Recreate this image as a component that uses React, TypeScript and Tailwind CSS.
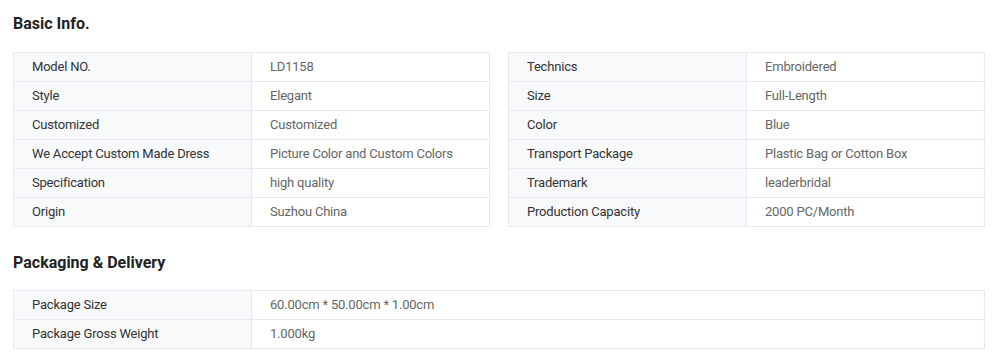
const basicLeft: [string, string][] = [
  ["Model NO.", "LD1158"],
  ["Style", "Elegant"],
  ["Customized", "Customized"],
  ["We Accept Custom Made Dress", "Picture Color and Custom Colors"],
  ["Specification", "high quality"],
  ["Origin", "Suzhou China"],
];

const basicRight: [string, string][] = [
  ["Technics", "Embroidered"],
  ["Size", "Full-Length"],
  ["Color", "Blue"],
  ["Transport Package", "Plastic Bag or Cotton Box"],
  ["Trademark", "leaderbridal"],
  ["Production Capacity", "2000 PC/Month"],
];

const packaging: [string, string][] = [
  ["Package Size", "60.00cm * 50.00cm * 1.00cm"],
  ["Package Gross Weight", "1.000kg"],
];

function InfoTable({ rows, half }: { rows: [string, string][]; half?: boolean }) {
  return (
    <table className="w-full border-collapse table-fixed text-[13px] leading-[28px] tracking-[-0.2px]">
      <colgroup>
        <col className={half ? "w-1/2" : "w-[238px]"} />
        <col />
      </colgroup>
      <tbody>
        {rows.map(([k, v]) => (
          <tr key={k}>
            <td className="h-[28px] border border-[#e6e9ef] bg-[#f8f9fb] pl-[18px] text-[#333] whitespace-nowrap">
              {k}
            </td>
            <td className="h-[28px] border border-[#e6e9ef] bg-white pl-[18px] text-[#666] whitespace-nowrap">
              {v}
            </td>
          </tr>
        ))}
      </tbody>
    </table>
  );
}

export default function App() {
  return (
    <div className="bg-white w-[993px] h-[358px] pl-[13px] pr-[8px] font-['Roboto','Liberation_Sans',sans-serif]">
      <h2 className="pt-[14px] text-[16px] leading-[20px] font-bold text-[#222]">Basic Info.</h2>
      <div className="mt-[18px] grid grid-cols-2 gap-[18px]">
        <InfoTable rows={basicLeft} half />
        <InfoTable rows={basicRight} half />
      </div>
      <h2 className="mt-[26px] text-[16px] leading-[20px] font-bold text-[#222]">Packaging &amp; Delivery</h2>
      <div className="mt-[17px]">
        <InfoTable rows={packaging} />
      </div>
    </div>
  );
}
